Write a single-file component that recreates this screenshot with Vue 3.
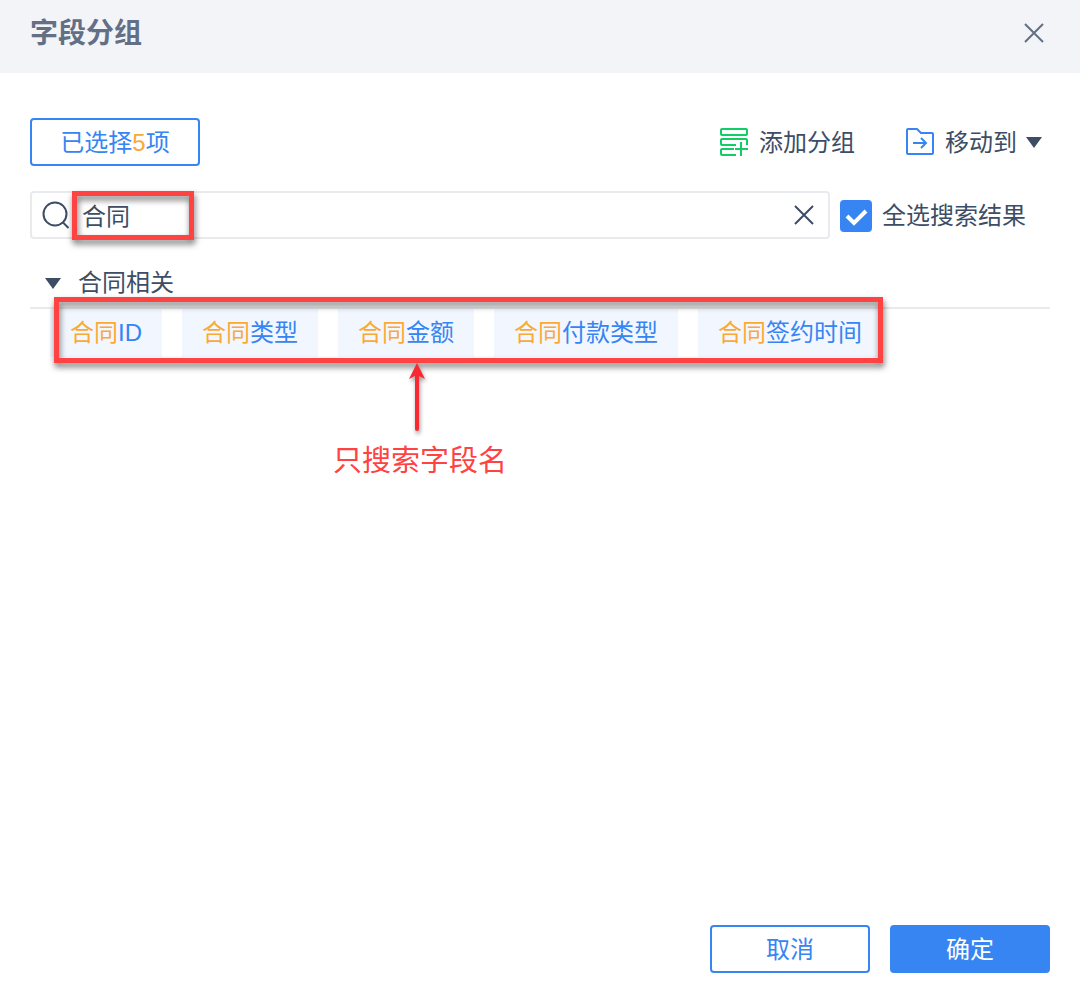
<script setup>
import { ref, computed } from 'vue'

const keyword = ref('合同')
const allSelected = ref(true)
const fields = ['ID', '类型', '金额', '付款类型', '签约时间']
const selectedCount = computed(() => fields.length)
</script>

<template>
  <main class="dialog">
    <header class="head">
      <h1 class="title">字段分组</h1>
      <button class="icon-btn close" type="button" aria-label="关闭">
        <svg width="22" height="22" viewBox="0 0 22 22" fill="none" stroke="currentColor" stroke-width="2">
          <path d="M2 2L20 20M20 2L2 20" />
        </svg>
      </button>
    </header>

    <section class="body">
      <div class="toolbar">
        <button class="btn selected" type="button">已选择<span class="hit">{{ selectedCount }}</span>项</button>
        <button class="tool" type="button">
          <svg width="30" height="30" viewBox="0 0 30 30" fill="none" stroke="#12cd66" stroke-width="2">
            <rect x="2" y="2" width="26" height="6" rx="1" />
            <path d="M28 18V13a1 1 0 0 0-1-1H3a1 1 0 0 0-1 1v4a1 1 0 0 0 1 1h14" />
            <path d="M15 22H3a1 1 0 0 0-1 1v4a1 1 0 0 0 1 1h14" />
            <path d="M22 15v14M16 22h13" />
          </svg>
          <span>添加分组</span>
        </button>
        <button class="tool move" type="button">
          <svg width="30" height="30" viewBox="0 0 30 30" fill="none" stroke="#3685f2" stroke-width="2">
            <path d="M2 3a1 1 0 0 1 1-1h9l4 4h11a1 1 0 0 1 1 1v19a1 1 0 0 1-1 1H3a1 1 0 0 1-1-1z" />
            <path d="M8 16h13M16 11l5 5-5 5" />
          </svg>
          <span>移动到</span>
          <svg class="caret" width="16" height="11" viewBox="0 0 16 11"><path d="M0 0h16L8 11z" fill="#3d4d66" /></svg>
        </button>
      </div>

      <div class="search-row">
        <div class="search">
          <svg width="28" height="30" viewBox="0 0 28 30" fill="none" stroke="#3d4d66" stroke-width="2">
            <circle cx="13" cy="14" r="11.500" />
            <path d="M20.500 22l6 6" />
          </svg>
          <input v-model="keyword" class="search-input" type="text" aria-label="搜索字段" />
          <button class="icon-btn clear" type="button" aria-label="清空" @click="keyword = ''">
            <svg width="20" height="20" viewBox="0 0 20 20" fill="none" stroke="currentColor" stroke-width="2">
              <path d="M1 1L19 19M19 1L1 19" />
            </svg>
          </button>
          <div class="frame frame-search"></div>
        </div>
        <label class="check">
          <span class="check-box">
            <input v-model="allSelected" type="checkbox" />
            <svg v-if="allSelected" width="32" height="32" viewBox="0 0 32 32" fill="none" stroke="#fff" stroke-width="4">
              <path d="M7 16l7 7L26 11" />
            </svg>
          </span>
          <span>全选搜索结果</span>
        </label>
      </div>

      <button class="group-head" type="button">
        <svg width="16" height="11" viewBox="0 0 16 11"><path d="M0 0h16L8 11z" fill="#3d4d66" /></svg>
        <span>合同相关</span>
      </button>
      <div class="group">
        <ul class="fields">
          <li v-for="f in fields" :key="f"><span class="hit">合同</span>{{ f }}</li>
        </ul>
        <div class="frame frame-fields"></div>
        <div class="note">
          <svg width="28" height="78" viewBox="0 0 28 78">
            <path d="M14 10V66" stroke="#fa2830" stroke-width="4" stroke-linecap="round" />
            <path d="M14 0L22 16 14 12 6 16z" fill="#fa2830" />
          </svg>
          <span>只搜索字段名</span>
        </div>
      </div>
    </section>

    <footer class="foot">
      <button class="btn action" type="button">取消</button>
      <button class="btn action primary" type="button">确定</button>
    </footer>
  </main>
</template>

<style>
body {
  background: #fff;
}
</style>

<style scoped>
.dialog {
  box-sizing: border-box;
  min-height: 100vh;
  display: flex;
  flex-direction: column;
  font-family: "Liberation Sans", "Noto Sans CJK SC", sans-serif;
  font-size: 24px;
  font-weight: 400;
  line-height: 36px;
  color: #3d4d66;
}
button,
input {
  font: inherit;
  color: inherit;
  margin: 0;
  padding: 0;
}
button {
  background: none;
  border: 0;
  cursor: pointer;
}
svg {
  display: block;
  flex: none;
}
.head {
  display: flex;
  justify-content: space-between;
  box-sizing: border-box;
  height: 73px;
  padding: 12px 35px 17px 30px;
  background: #f2f4f8;
}
.title {
  margin: 0;
  font-size: 28px;
  line-height: 44px;
  font-weight: 700;
  color: #626f85;
}
.icon-btn {
  display: flex;
  align-items: center;
}
.close {
  height: 42px;
  color: #626f85;
}
.body {
  flex: 1;
  padding: 45px 30px 0;
}
.toolbar {
  display: flex;
  align-items: center;
  padding-right: 8px;
}
.btn {
  box-sizing: border-box;
  height: 48px;
  padding-top: 2px;
  border: 2px solid #3685f2;
  border-radius: 4px;
  color: #3685f2;
  white-space: nowrap;
}
.selected {
  width: 170px;
  margin-right: auto;
}
.hit {
  color: #faa937;
}
.tool {
  display: flex;
  align-items: center;
  gap: 10px;
  white-space: nowrap;
}
.tool span {
  padding-top: 2px;
}
.move {
  margin-left: 50px;
}
.caret {
  margin-left: -1px;
}
.search-row {
  display: flex;
  align-items: center;
  gap: 10px;
  margin-top: 25px;
}
.search {
  position: relative;
  flex: 1;
  min-width: 0;
  box-sizing: border-box;
  height: 48px;
  display: flex;
  align-items: center;
  padding: 0 14px 0 10px;
  border: 2px solid #e8eaed;
  border-radius: 4px;
}
.search-input {
  flex: 1;
  min-width: 0;
  height: 36px;
  margin-left: 12px;
  padding-top: 4px;
  border: 0;
  outline: 0;
  background: none;
}
.check {
  display: flex;
  align-items: center;
  gap: 10px;
  padding: 2px 24px 0 0;
  white-space: nowrap;
}
.check-box {
  position: relative;
  width: 32px;
  height: 32px;
}
.check-box input {
  appearance: none;
  display: block;
  width: 32px;
  height: 32px;
  border: 2px solid #3685f2;
  border-radius: 4px;
}
.check-box input:checked {
  background: #3685f2;
}
.check-box svg {
  position: absolute;
  inset: 0;
  pointer-events: none;
}
.group-head {
  display: flex;
  align-items: center;
  gap: 17px;
  width: 100%;
  margin-top: 20px;
  padding: 6px 0 6px 15px;
  border-bottom: 2px solid #e8eaed;
}
.group {
  position: relative;
  width: fit-content;
  margin-left: 20px;
}
.fields {
  display: flex;
  gap: 20px;
  margin: 0;
  padding: 0;
  list-style: none;
}
.fields li {
  padding: 6px 20px;
  background: #f2f7ff;
  color: #3685f2;
  white-space: nowrap;
}
.frame {
  position: absolute;
  box-sizing: border-box;
  border: 5px solid #ff4242;
  filter: drop-shadow(1px 4px 3px rgba(0, 0, 0, 0.55));
  pointer-events: none;
}
.frame-search {
  left: 40px;
  top: -2px;
  width: 122px;
  height: 49px;
}
.frame-fields {
  inset: -12px -1px -6px 4px;
}
.note {
  position: absolute;
  left: 283px;
  top: 54px;
  color: #ff4242;
  font-size: 29px;
  line-height: 40px;
  white-space: nowrap;
}
.note svg {
  margin-left: 70px;
  filter: drop-shadow(1px 3px 2px rgba(0, 0, 0, 0.4));
}
.foot {
  display: flex;
  justify-content: flex-end;
  gap: 20px;
  padding: 0 30px 17px;
}
.action {
  width: 160px;
}
.primary {
  background: #3685f2;
  color: #fff;
}
</style>
